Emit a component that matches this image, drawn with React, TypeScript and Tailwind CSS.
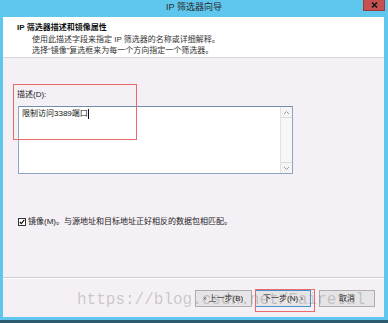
export default function App() {
  return (
    <div className="relative w-[388px] h-[323px] bg-[#5fc6ee] flex flex-col overflow-hidden font-['Liberation_Sans','Noto_Sans_CJK_SC',sans-serif] text-[#1e1e1e]">
      {/* Title bar */}
      <div className="h-[17px] grid grid-cols-[1fr_auto_1fr] items-start shrink-0">
        <div />
        <div className="text-[9px] leading-[14px] text-[#2a2a2a]">IP 筛选器向导</div>
        <div className="flex justify-end pr-[3px]">
          <div className="w-[22px] h-[11px] bg-[#c75050] border border-[#9c3b37] border-t-0 flex items-center justify-center">
            <svg width="7" height="6" viewBox="0 0 7 6">
              <path d="M1 0.5 L6 5.5 M6 0.5 L1 5.5" stroke="#1a1a1a" strokeWidth="1.6" />
            </svg>
          </div>
        </div>
      </div>

      {/* Client area */}
      <div className="flex-1 ml-[3px] mr-[4px] flex flex-col bg-[#f5f0f5] min-h-0">
        {/* Header */}
        <div className="h-[41px] shrink-0 bg-white border-b border-[#d6d6d6] pt-[5px] pl-[14px] text-[8px] leading-[11.5px]">
          <div className="font-bold text-[#111]">IP 筛选器描述和镜像属性</div>
          <div className="pl-[15px] text-[#333]">使用此描述字段来指定 IP 筛选器的名称或详细解释。</div>
          <div className="pl-[15px] text-[#333]">选择“镜像”复选框来为每一个方向指定一个筛选器。</div>
        </div>

        {/* Body */}
        <div className="flex-1 flex flex-col pl-[14px] min-h-0">
          <div className="mt-[31px] text-[8px] leading-[12px] text-[#222]">描述(D):</div>
          <div className="ml-[1px] mt-[5px] w-[275px] h-[68px] bg-white border border-[#8aa6c4] border-t-[#6f8eae] flex">
            <div className="flex-1 pl-[3px] pt-[1px] text-[8px] leading-[12px] text-[#111] flex items-start">
              <span>限制访问3389端口</span>
              <span className="inline-block w-[1px] h-[10px] bg-[#111] mt-[1px]" />
            </div>
            <div className="w-[12px] bg-[#f7f7f7] border-l border-[#e2e2e2] flex flex-col justify-between">
              <div className="h-[11px] border-b border-[#dcdcdc] bg-[#f4f4f4] flex items-center justify-center">
                <svg width="7" height="5" viewBox="0 0 7 5">
                  <path d="M1 4 L3.5 1.5 L6 4" stroke="#9a9a9a" strokeWidth="1" fill="none" />
                </svg>
              </div>
              <div className="h-[11px] border-t border-[#dcdcdc] bg-[#f4f4f4] flex items-center justify-center">
                <svg width="7" height="5" viewBox="0 0 7 5">
                  <path d="M1 1 L3.5 3.5 L6 1" stroke="#9a9a9a" strokeWidth="1" fill="none" />
                </svg>
              </div>
            </div>
          </div>
          <div className="mt-[42px] flex items-center gap-[2px] h-[12px] pl-[1px]">
            <div className="w-[8px] h-[8px] bg-white border border-[#333] flex items-center justify-center">
              <svg width="6" height="6" viewBox="0 0 6 6">
                <path d="M0.8 3 L2.3 4.6 L5.3 0.9" stroke="#111" strokeWidth="1.2" fill="none" />
              </svg>
            </div>
            <span className="text-[8px] leading-[12px] text-[#222]">镜像(M)。与源地址和目标地址正好相反的数据包相匹配。</span>
          </div>
        </div>

        {/* Footer */}
        <div className="shrink-0 border-t border-[#cfcfcf]">
          <div className="border-t border-white flex justify-end gap-[3px] pt-[11px] pb-[10px] pr-[9px]">
            <div className="w-[57px] h-[17px] bg-[#e6e4e6] border border-[#adadad] flex items-center justify-center text-[8px] text-[#222]">‹ 上一步(B)</div>
            <div className="w-[56px] h-[17px] bg-[#e6e4e6] border border-[#4a90c8] flex items-center justify-center text-[8px] text-[#222]">下一步(N) ›</div>
            <div className="ml-[5px] w-[56px] h-[17px] bg-[#e6e4e6] border border-[#adadad] flex items-center justify-center text-[8px] text-[#222]">取消</div>
          </div>
        </div>
      </div>

      {/* Bottom frame */}
      <div className="h-[3px] shrink-0" />
      <div className="h-[3px] shrink-0 bg-[#2c5a6e]" />

      {/* Annotations overlay */}
      <div className="absolute left-[13px] top-[84px] w-[124px] h-[56px] border border-[#e86a6a] pointer-events-none" />
      <div className="absolute left-[255px] top-[289px] w-[60px] h-[23px] border border-[#e86a6a] pointer-events-none" />

      {/* Watermark */}
      <div className="absolute left-[77px] top-[290px] text-[16px] leading-[20px] font-['Liberation_Mono',monospace] text-[rgba(120,120,120,0.35)] whitespace-nowrap pointer-events-none">
        https://blog.csdn.net/Fairetal
      </div>
    </div>
  );
}
